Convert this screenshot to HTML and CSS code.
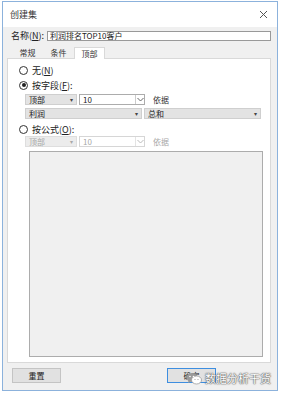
FILE: index.html
```html
<!DOCTYPE html>
<html lang="zh-CN">
<head>
    <meta charset="UTF-8">
    <title>创建集</title>
    <link rel="stylesheet" href="styles.css">
</head>
<body>
    <div class="window">
        <div class="titlebar">
            <span class="title">创建集</span>
            <svg class="close" width="9" height="9" viewBox="0 0 9 9">
                <path d="M1 1L8 8M8 1L1 8" stroke="#555" stroke-width="1"/>
            </svg>
        </div>
        <div class="content">
            <div class="name-row">
                <label>名称(<u>N</u>):</label>
                <div class="name-input">利润排名TOP10客户</div>
            </div>
            <div class="tabs">
                <span class="tab">常规</span>
                <span class="tab">条件</span>
                <span class="tab active">顶部</span>
            </div>
            <div class="panel">
                <div class="radio-row">
                    <span class="radio"></span>
                    <span>无(<u>N</u>)</span>
                </div>
                <div class="radio-row">
                    <span class="radio checked"></span>
                    <span>按字段(<u>F</u>):</span>
                </div>
                <div class="field-row">
                    <div class="combo small"><span>顶部</span><span class="arrow">▾</span></div>
                    <div class="edit-combo"><span>10</span><span class="chev">
                        <svg width="7" height="5" viewBox="0 0 7 5"><path d="M0.5 1L3.5 4L6.5 1" fill="none" stroke="#666"/></svg>
                    </span></div>
                    <span class="by">依据</span>
                </div>
                <div class="field-row">
                    <div class="combo wide"><span>利润</span><span class="arrow">▾</span></div>
                    <div class="combo wide"><span>总和</span><span class="arrow">▾</span></div>
                </div>
                <div class="radio-row formula">
                    <span class="radio"></span>
                    <span>按公式(<u>O</u>):</span>
                </div>
                <div class="field-row disabled">
                    <div class="combo small"><span>顶部</span><span class="arrow">▾</span></div>
                    <div class="edit-combo"><span>10</span><span class="chev">
                        <svg width="7" height="5" viewBox="0 0 7 5"><path d="M0.5 1L3.5 4L6.5 1" fill="none" stroke="#bbb"/></svg>
                    </span></div>
                    <span class="by">依据</span>
                </div>
                <div class="formula-box"></div>
            </div>
            <div class="footer">
                <button class="btn">重置</button>
                <button class="btn primary">确定</button>
            </div>
        </div>
        <div class="watermark">
            <svg width="16" height="13" viewBox="0 0 16 13">
                <ellipse cx="6" cy="5.5" rx="5.5" ry="4.5" fill="#9a9a9a"/>
                <path d="M2.5 8.5L2 11L5 9.5Z" fill="#9a9a9a"/>
                <ellipse cx="10.5" cy="8" rx="5" ry="4" fill="#fff" stroke="#9a9a9a" stroke-width="0.8"/>
                <circle cx="4" cy="4.5" r="0.8" fill="#fff"/>
                <circle cx="7.5" cy="4.5" r="0.8" fill="#fff"/>
                <circle cx="9" cy="7.5" r="0.6" fill="#9a9a9a"/>
                <circle cx="12" cy="7.5" r="0.6" fill="#9a9a9a"/>
            </svg>
            <span>数据分析干货</span>
        </div>
    </div>
</body>
</html>
```

FILE: styles.css
```css
* {
    margin: 0;
    padding: 0;
    box-sizing: border-box;
}

body {
    font-family: "Noto Sans CJK SC", "Liberation Sans", sans-serif;
    font-size: 9px;
    color: #222;
    background-color: #fff;
    width: 281px;
    height: 393px;
    padding: 1px 3px 0 2px;
}

u {
    text-decoration: underline;
}

.window {
    position: relative;
    width: 276px;
    height: 390px;
    border: 1px solid #8cb2dc;
    background: #f0f0f0;
    display: flex;
    flex-direction: column;
}

.titlebar {
    height: 25px;
    background: #fff;
    display: flex;
    align-items: center;
    justify-content: space-between;
    padding: 0 9px 0 7px;
    flex-shrink: 0;
}

.title {
    font-size: 9px;
    color: #333;
}

.content {
    flex: 1;
    display: flex;
    flex-direction: column;
    padding: 4px 6px 0 4px;
}

.name-row {
    display: flex;
    align-items: center;
    height: 10px;
    padding-left: 4px;
}

.name-row label {
    width: 36px;
    line-height: 10px;
}

.name-input {
    flex: 1;
    height: 10px;
    border: 1px solid #999;
    background: #fff;
    line-height: 8px;
    padding-left: 2px;
    font-size: 8px;
    overflow: hidden;
}

.tabs {
    display: flex;
    align-items: flex-end;
    height: 11px;
    padding-left: 5px;
    margin-top: 6px;
}

.tab {
    width: 31px;
    height: 10px;
    line-height: 10px;
    text-align: center;
    font-size: 8px;
    color: #333;
}

.tab.active {
    background: #fff;
    height: 12px;
    line-height: 11px;
    border: 1px solid #d9d9d9;
    border-bottom: none;
    margin-bottom: -1px;
    position: relative;
}

.panel {
    height: 305px;
    background: #fff;
    border: 1px solid #d9d9d9;
    display: flex;
    flex-direction: column;
    padding: 5px 6px 0 11px;
}

.radio-row {
    display: flex;
    align-items: center;
    gap: 4px;
    height: 12px;
    margin-bottom: 3px;
}

.radio-row.formula {
    margin-top: 1px;
    margin-bottom: 1px;
}

.radio {
    width: 9px;
    height: 9px;
    border: 1px solid #333;
    border-radius: 50%;
    display: flex;
    align-items: center;
    justify-content: center;
}

.radio.checked::after {
    content: "";
    width: 4px;
    height: 4px;
    border-radius: 50%;
    background: #222;
}

.field-row {
    display: flex;
    align-items: center;
    gap: 2px;
    height: 11px;
    margin: 0 0 3px 6px;
    font-size: 8px;
}

.combo {
    height: 11px;
    background: #e3e3e3;
    border: 1px solid #cfcfcf;
    display: flex;
    align-items: center;
    justify-content: space-between;
    padding: 0 3px;
    line-height: 9px;
}

.combo .arrow {
    font-size: 6px;
    color: #444;
}

.combo.small {
    width: 52px;
}

.combo.wide {
    width: 117px;
}

.edit-combo {
    width: 66px;
    height: 11px;
    border: 1px solid #acacac;
    background: #fff;
    display: flex;
    align-items: center;
    justify-content: space-between;
    padding-left: 3px;
    line-height: 9px;
}

.chev {
    width: 9px;
    height: 9px;
    border-left: 1px solid #ccc;
    display: flex;
    align-items: center;
    justify-content: center;
}

.by {
    margin-left: 6px;
    color: #333;
}

.disabled .combo {
    background: #ececec;
    border-color: #dedede;
    color: #a8a8a8;
}

.disabled .combo .arrow,
.disabled .by {
    color: #a8a8a8;
}

.disabled .edit-combo {
    border-color: #d6d6d6;
    color: #a8a8a8;
}

.disabled .chev {
    border-left-color: #e4e4e4;
}

.formula-box {
    height: 206px;
    margin: 1px 0 0 10px;
    width: 234px;
    background: #f0f0f0;
    border: 1px solid #acacac;
}

.footer {
    display: flex;
    justify-content: space-between;
    padding: 5px 0 0 5px;
}

.btn {
    width: 49px;
    height: 15px;
    font-family: "Noto Sans CJK SC", sans-serif;
    font-size: 8px;
    background: #e1e1e1;
    border: 1px solid #c4c4c4;
    color: #222;
    margin-right: 55px;
}

.btn.primary {
    border-color: #3d8ee0;
}

.watermark {
    position: absolute;
    left: 183px;
    top: 368px;
    display: flex;
    align-items: center;
    gap: 3px;
    color: #fff;
    font-size: 11px;
    text-shadow: 0 0 1px #555, 0 0 1px #555, 0 0 2px #777;
}
```
